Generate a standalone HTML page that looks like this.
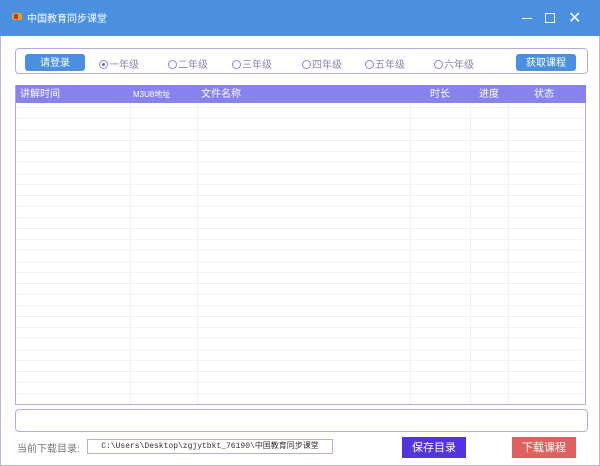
<!DOCTYPE html><html><head><meta charset="utf-8"><style>
*{margin:0;padding:0;box-sizing:border-box}
body{width:600px;height:466px;overflow:hidden;background:#fff;font-family:"Liberation Sans","Noto Sans CJK SC",sans-serif;font-size:10px;color:#555;position:relative}
.abs{position:absolute}
.title{left:0;top:0;width:600px;height:36px;background:#4a8fe0;color:#fff;font-size:10px}
.frame{left:0;top:36px;width:600px;height:430px;border:1px solid #b9b3ef;border-top:none}
.btn{color:#fff;text-align:center;font-size:10px;padding-top:2px}
.radio{display:inline-block;width:9px;height:9px;border:1px solid #8b86d8;border-radius:50%;vertical-align:-1px;margin-right:1px;position:relative}
.r{color:#8888aa}
.hd span{top:4px}
</style></head><body>
<div class="abs title">
 <div class="abs" style="left:12px;top:13px;width:10px;height:7px;background:#e8a020;border-radius:2px"></div>
 <div class="abs" style="left:14px;top:14px;width:4px;height:5px;background:#c33"></div>
 <div class="abs" style="left:27px;top:10px">中国教育同步课堂</div>
 <div class="abs" style="left:522px;top:18px;width:10px;height:1px;background:#fff"></div>
 <div class="abs" style="left:545px;top:13px;width:10px;height:10px;border:1px solid #fff"></div>
 <div class="abs" style="left:568px;top:8px;font-size:16px;font-weight:100">✕</div>
</div>
<div class="abs frame"></div>
<div class="abs" style="left:15px;top:48px;width:573px;height:26px;border:1px solid #b0aee0;border-radius:4px"></div>
<div class="abs btn" style="left:25px;top:54px;width:60px;height:17px;background:#4a90e0;border-radius:3px;line-height:15px">请登录</div>
<div class="abs r" style="left:99px;top:56px"><span class="radio"><span class="abs" style="left:2px;top:2px;width:3px;height:3px;background:#6a66d0;border-radius:50%"></span></span>一年级</div>
<div class="abs r" style="left:168px;top:56px"><span class="radio"></span>二年级</div>
<div class="abs r" style="left:232px;top:56px"><span class="radio"></span>三年级</div>
<div class="abs r" style="left:302px;top:56px"><span class="radio"></span>四年级</div>
<div class="abs r" style="left:365px;top:56px"><span class="radio"></span>五年级</div>
<div class="abs r" style="left:434px;top:56px"><span class="radio"></span>六年级</div>
<div class="abs btn" style="left:516px;top:54px;width:60px;height:17px;background:#4a90e0;border-radius:3px;line-height:15px">获取课程</div>
<div class="abs" style="left:15px;top:85px;width:571px;height:320px;border:1px solid #b0aee0;background:repeating-linear-gradient(to bottom,transparent 0,transparent 10px,#f3f3f6 10px,#f3f3f6 11px)"></div>
<div class="abs hd" style="left:16px;top:85px;width:570px;height:18px;background:#8682ee;color:#fff;line-height:12px">
 <span class="abs" style="left:4px">讲解时间</span><span class="abs" style="left:117px;font-size:8px">M3U8地址</span><span class="abs" style="left:185px">文件名称</span><span class="abs" style="left:414px">时长</span><span class="abs" style="left:463px">进度</span><span class="abs" style="left:518px">状态</span>
</div>
<div class="abs" style="left:130px;top:103px;width:1px;height:301px;background:#f0f0f4"></div>
<div class="abs" style="left:197px;top:103px;width:1px;height:301px;background:#f0f0f4"></div>
<div class="abs" style="left:410px;top:103px;width:1px;height:301px;background:#f0f0f4"></div>
<div class="abs" style="left:470px;top:103px;width:1px;height:301px;background:#f0f0f4"></div>
<div class="abs" style="left:508px;top:103px;width:1px;height:301px;background:#f0f0f4"></div>
<div class="abs" style="left:15px;top:409px;width:573px;height:23px;border:1px solid #b0aee0;border-radius:4px"></div>
<div class="abs" style="left:17px;top:440px;color:#777">当前下载目录:</div>
<div class="abs" style="left:87px;top:439px;width:246px;height:15px;border:1px solid #b0aee0;font-family:'Liberation Mono','Noto Sans CJK SC',monospace;font-size:8px;color:#333;line-height:13px;text-align:center;white-space:nowrap">C:\Users\Desktop\zgjytbkt_76190\中国教育同步课堂</div>
<div class="abs btn" style="left:402px;top:437px;width:64px;height:21px;background:#5533dd;line-height:19px;font-size:11px">保存目录</div>
<div class="abs btn" style="left:512px;top:437px;width:64px;height:21px;background:#e06060;line-height:19px;font-size:11px">下载课程</div>
</body></html>
